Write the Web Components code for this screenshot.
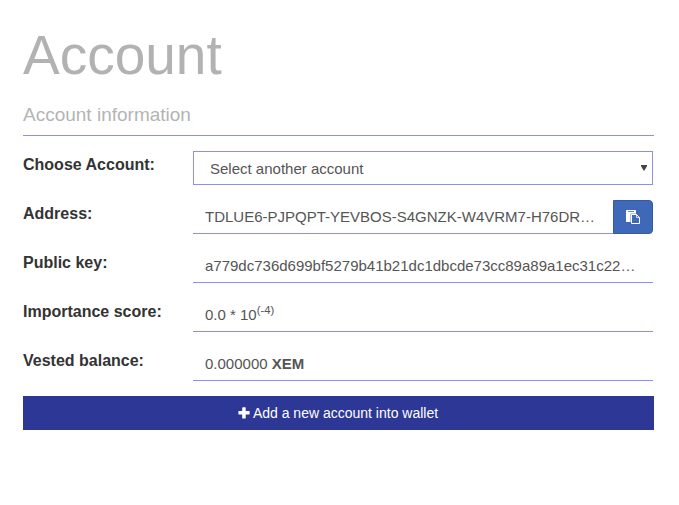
<!DOCTYPE html>
<html lang="en">
<head>
<meta charset="utf-8">
<title>Account</title>
<style>
body { margin: 0; background: #fff; font-family: "Liberation Sans", Arial, sans-serif; color: #555; }
sup { font-size: 75%; line-height: 0; position: relative; top: -0.5em; vertical-align: baseline; }
</style>
</head>
<body>
<account-page heading="Account" subheading="Account information">
  <field-row label="Choose Account:"><account-select>Select another account</account-select></field-row>
  <field-row label="Address:"><value-box>TDLUE6-PJPQPT-YEVBOS-S4GNZK-W4VRM7-H76DR…<copy-button slot="action"></copy-button></value-box></field-row>
  <field-row label="Public key:"><value-box>a779dc736d699bf5279b41b21dc1dbcde73cc89a89a1ec31c22…</value-box></field-row>
  <field-row label="Importance score:"><value-box>0.0 * 10<sup>(-4)</sup></value-box></field-row>
  <field-row label="Vested balance:"><value-box>0.000000 <b>XEM</b></value-box></field-row>
  <add-button slot="footer">Add a new account into wallet</add-button>
</account-page>
<script>
const define = (name, html, setup) => customElements.define(name, class extends HTMLElement {
  constructor() {
    super();
    this.attachShadow({ mode: 'open' }).innerHTML = html;
  }
  connectedCallback() { if (setup) setup(this, this.shadowRoot); }
});

define('account-page', `
<style>
:host { display: block; width: 631px; padding: 25px 0 0 23px; }
h1 { margin: 0; font-size: 55px; line-height: 60px; font-weight: 400; color: #b2b2b2; }
h2 { margin: 17px 0 15px; padding-bottom: 8px; font-size: 19px; line-height: 25px; height: 25px; font-weight: 400; color: #b4b4b4; border-bottom: 1px solid #8c8ff0; }
.rows { display: flex; flex-direction: column; gap: 15px; margin-bottom: 15px; }
</style>
<h1></h1><h2></h2>
<div class="rows"><slot></slot></div>
<slot name="footer"></slot>`, (el, root) => {
  root.querySelector('h1').textContent = el.getAttribute('heading');
  root.querySelector('h2').textContent = el.getAttribute('subheading');
});

define('field-row', `
<style>
:host { display: grid; grid-template-columns: 170px 460px; height: 34px; }
label { font-weight: 700; font-size: 16px; line-height: 28px; color: #333; white-space: nowrap; }
</style>
<label></label><slot></slot>`, (el, root) => {
  root.querySelector('label').textContent = el.getAttribute('label');
});

define('account-select', `
<style>
:host { display: flex; align-items: center; justify-content: space-between; box-sizing: border-box; height: 34px; padding: 2px 5px 0 16px; border: 1px solid #8c8ff0; font-size: 15px; line-height: 20px; }
svg { display: block; width: 6px; height: 6px; margin-top: -3px; fill: #444; }
</style>
<span><slot></slot></span><svg viewBox="0 0 6 6"><path d="M0 0H6V1L3.500 5.500H2.500L0 1Z"/></svg>`);

define('value-box', `
<style>
:host { display: flex; height: 34px; font-size: 15px; line-height: 20px; white-space: nowrap; }
div { flex: 1; box-sizing: border-box; padding: 7px 0 0 12px; border-bottom: 1px solid #8c8ff0; }
</style>
<div><slot></slot></div><slot name="action"></slot>`);

define('copy-button', `
<style>
:host { display: flex; align-items: center; justify-content: center; box-sizing: border-box; width: 40px; height: 34px; background: #4068b8; border: 1px solid #345a9f; border-radius: 0 4px 4px 0; }
svg { display: block; width: 14px; height: 14px; }
</style>
<svg viewBox="0 0 14 14"><rect width="10" height="12" rx=".4" fill="#fff"/><path d="M2 1.500H8" stroke="#4068b8" stroke-width=".8"/><path d="M4.700 12.500V3.800H10.500" stroke="#4068b8" stroke-width=".5" fill="none"/><path d="M5.500 4.500H10.500L13.500 7.500V13.500H5.500Z" fill="#4068b8" stroke="#fff"/><path d="M10.500 4.500V7.500H13.500" fill="none" stroke="#fff" stroke-width=".8"/></svg>`);

define('add-button', `
<style>
:host { display: flex; align-items: center; justify-content: center; gap: 3px; box-sizing: border-box; padding-right: 1px; height: 34px; background: #2c3796; color: #fff; font-size: 14px; line-height: 20px; }
svg { display: block; width: 12px; height: 12px; fill: #fff; }
</style>
<svg viewBox="0 0 12 12"><rect y="4" x=".4" width="11.200" height="3.500" rx=".6"/><rect x="4.200" y=".3" width="3.500" height="11.200" rx=".6"/></svg><span><slot></slot></span>`);
</script>
</body>
</html>
